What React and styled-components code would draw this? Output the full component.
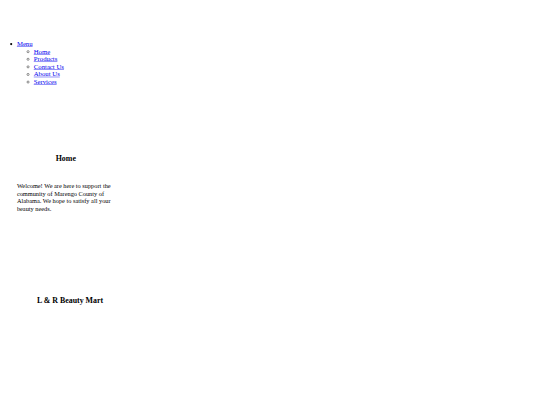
import React from 'react';
import styled, { createGlobalStyle } from 'styled-components';

const GlobalStyle = createGlobalStyle`
  html, body {
    margin: 0;
    padding: 0;
    background: #ffffff;
    overflow: hidden;
  }
  body {
    font-family: 'Liberation Serif', 'Times New Roman', serif;
    font-size: 16px;
    color: #000000;
  }
`;

// the page is laid out at 1280px wide and shown at 540px
const Viewport = styled.div`
  width: 540px;
  height: 405px;
  overflow: hidden;
`;

const Page = styled.div`
  width: 1280px;
  min-height: 960px;
  display: flex;
  flex-direction: column;
  transform: scale(0.421875);
  transform-origin: top left;
`;

const NavList = styled.ul`
  margin: ${({ $nested }) => ($nested ? '0' : '95px 0 0 0')};
  padding-left: 40px;
  list-style: ${({ $nested }) => ($nested ? 'circle' : 'disc')};
`;

const NavItem = styled.li``;

const NavLink = styled.a`
  color: #0000ee;
  text-decoration: underline;
`;

const Column = styled.section`
  width: ${({ $width }) => $width}px;
  margin-left: 40px;
  display: flex;
  flex-direction: column;
`;

const Heading = styled.h3`
  margin: ${({ $top }) => $top}px 0 0 0;
  font-size: 1.17em;
  font-weight: bold;
  text-align: center;
`;

const Text = styled.p`
  margin: 45px 0 0 0;
  font-size: 15px;
  line-height: 18px;
`;

const menu = ['Home', 'Products', 'Contact Us', 'About Us', 'Services'];

export default function App() {
  return (
    <Viewport>
      <GlobalStyle />
      <Page>
        <NavList>
          <NavItem>
            <NavLink href="#">Menu</NavLink>
            <NavList $nested>
              {menu.map((item) => (
                <NavItem key={item}>
                  <NavLink href="#">{item}</NavLink>
                </NavItem>
              ))}
            </NavList>
          </NavItem>
        </NavList>
        <Column $width={232}>
          <Heading $top={161.5}>Home</Heading>
          <Text>
            Welcome! We are here to support the community of Marengo County of
            Alabama. We hope to satisfy all your beauty needs.
          </Text>
        </Column>
        <Column $width={252}>
          <Heading $top={198.5}>L &amp; R Beauty Mart</Heading>
        </Column>
      </Page>
    </Viewport>
  );
}
